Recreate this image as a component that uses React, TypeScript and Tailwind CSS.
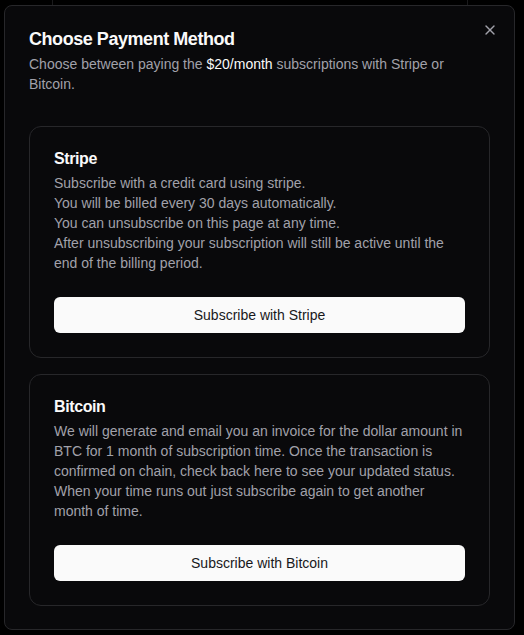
import React from "react";

function CloseIcon() {
  return (
    <svg width="16" height="16" viewBox="0 0 24 24" fill="none" stroke="currentColor" strokeWidth="2" strokeLinecap="round" strokeLinejoin="round">
      <path d="M18 6 6 18" />
      <path d="m6 6 12 12" />
    </svg>
  );
}

function Card({ title, lines, button }: { title: string; lines: string[]; button: string }) {
  return (
    <div className="rounded-xl border border-[#27272a] bg-[#09090b] p-6">
      <h3 className="text-base font-semibold leading-none tracking-tight text-[#fafafa]">{title}</h3>
      <div className="mt-1.5 text-sm leading-5 text-[#a1a1aa]">
        {lines.map((l, i) => (
          <p key={i}>{l}</p>
        ))}
      </div>
      <button className="mt-6 flex h-9 w-full items-center justify-center rounded-md bg-[#fafafa] text-sm text-[#18181b]">
        {button}
      </button>
    </div>
  );
}

export default function App() {
  return (
    <div className="h-[635px] w-[524px] overflow-hidden bg-black font-['Liberation_Sans',Arial,sans-serif]">
      <div className="ml-[52px] h-[5px] w-[416px] border-x border-[#1a1a1c]" />
      <div className="relative ml-[4px] h-[625px] w-[511px] rounded-lg border border-[#27272a] bg-[#09090b] p-6">
        <button className="absolute right-4 top-4 text-[#a1a1aa]">
          <CloseIcon />
        </button>
        <h2 className="text-lg font-semibold leading-none tracking-tight text-[#fafafa]">Choose Payment Method</h2>
        <p className="mt-1.5 text-sm leading-5 text-[#a1a1aa]">
          Choose between paying the <span className="text-[#fafafa]">$20/month</span> subscriptions with Stripe or Bitcoin.
        </p>
        <div className="mt-8 flex flex-col gap-4">
          <Card
            title="Stripe"
            lines={[
              "Subscribe with a credit card using stripe.",
              "You will be billed every 30 days automatically.",
              "You can unsubscribe on this page at any time.",
              "After unsubscribing your subscription will still be active until the end of the billing period.",
            ]}
            button="Subscribe with Stripe"
          />
          <Card
            title="Bitcoin"
            lines={[
              "We will generate and email you an invoice for the dollar amount in BTC for 1 month of subscription time. Once the transaction is confirmed on chain, check back here to see your updated status. When your time runs out just subscribe again to get another month of time.",
            ]}
            button="Subscribe with Bitcoin"
          />
        </div>
      </div>
    </div>
  );
}
